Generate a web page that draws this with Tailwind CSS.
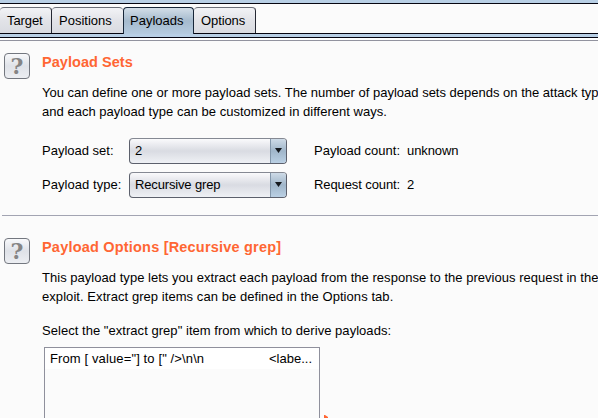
<!DOCTYPE html>
<html lang="en">
<head>
<meta charset="utf-8">
<title>Payloads</title>
<script src="https://cdn.jsdelivr.net/npm/@tailwindcss/browser@4"></script>
</head>
<body class="w-[598px] h-[418px] overflow-hidden bg-[#fbfbfb] font-['Liberation_Sans',Arial,sans-serif] text-[13px] leading-[19px] text-black whitespace-nowrap">
<header>
  <div class="h-1 bg-[#b8cfe5] border-b border-[#050510]"></div>
  <nav class="flex h-[30px] pt-[3px] border-b border-[#050510]">
    <div class="w-[52px] h-[26px] pl-[7px] pt-[3px] tracking-[-0.1px] border-t border-r border-t-[#6b6f78] border-r-[#252833] rounded-t-[4px] bg-linear-to-b from-[#f2f3f6] via-[#e2e3e8] to-[#d9dbe1]">Target</div>
    <div class="w-[71px] h-[26px] pl-[7px] pt-[3px] border-t border-t-[#6b6f78] rounded-t-[4px] bg-linear-to-b from-[#f2f3f6] via-[#e2e3e8] to-[#d9dbe1]">Positions</div>
    <div class="w-[71px] h-[27px] pl-1.5 pt-[3px] border-t border-x border-[#172638] rounded-t-[4px] bg-linear-to-b from-[#d3dee8] via-[#a5bacd] to-[#b5cbe0]">Payloads</div>
    <div class="w-[62px] h-[26px] pl-[7px] pt-[3px] tracking-[-0.1px] border-t border-r border-t-[#6b6f78] border-r-[#252833] rounded-t-[4px] bg-linear-to-b from-[#f2f3f6] via-[#e2e3e8] to-[#d9dbe1]">Options</div>
  </nav>
  <div class="h-1 bg-[#b8cfe5] border-b border-[#050510]"></div>
  <div class="h-[3px] border-b border-[#92939f] bg-white"></div>
</header>
<main>
  <section class="flex h-[175px] w-[596px] ml-0.5 pl-0.5 pt-3 border-b border-[#a2a4b2]">
    <div class="w-[26px] h-[26px] shrink-0 flex items-center justify-center rounded-[4px] border border-[#73777f] bg-linear-to-b from-[#f8f9fb] via-[#dfe2e8] to-[#eceef2] font-['DejaVu_Serif',serif] font-bold text-[22px] text-[#858585]">?</div>
    <div class="ml-3">
      <h2 class="font-bold text-[14.5px] tracking-[0.05px] text-[#ff6633]">Payload Sets</h2>
      <p class="mt-[11px]">You can define one or more payload sets. The number of payload sets depends on the attack type</p>
      <p class="tracking-[0.02px]">and each payload type can be customized in different ways.</p>
      <div class="grid grid-cols-[87px_185px_93px_auto] grid-rows-[26px_26px] gap-y-2 mt-[17px] items-center">
        <span class="-mt-0.5">Payload set:</span>
        <div class="w-[158px] h-[26px] flex items-center border border-[#5c606c] border-t-[#858993] rounded-[4px] overflow-hidden bg-linear-to-b from-[#fafafc] via-[#d9dbe2] to-[#eff1f5]">
          <span class="flex-1 pl-[5px] -mt-0.5">2</span>
          <span class="w-4 h-full flex items-center justify-center border-l border-[#8397ab] bg-linear-to-b from-[#cedbe7] via-[#a0b6ca] to-[#bad0e4]"><svg class="-mt-px" width="7" height="5" viewBox="0 0 7 5"><path d="M0 0h7L3.5 5z" fill="#15191e"/></svg></span>
        </div>
        <span class="-mt-0.5">Payload count:</span><span class="-mt-0.5 tracking-[-0.1px]">unknown</span>
        <span class="-mt-0.5 tracking-[0.05px]">Payload type:</span>
        <div class="w-[158px] h-[26px] flex items-center border border-[#5c606c] border-t-[#858993] rounded-[4px] overflow-hidden bg-linear-to-b from-[#fafafc] via-[#d9dbe2] to-[#eff1f5]">
          <span class="flex-1 pl-[5px] -mt-0.5 tracking-[-0.15px]">Recursive grep</span>
          <span class="w-4 h-full flex items-center justify-center border-l border-[#8397ab] bg-linear-to-b from-[#cedbe7] via-[#a0b6ca] to-[#bad0e4]"><svg class="-mt-px" width="7" height="5" viewBox="0 0 7 5"><path d="M0 0h7L3.5 5z" fill="#15191e"/></svg></span>
        </div>
        <span class="-mt-0.5 tracking-[-0.1px]">Request count:</span><span class="-mt-0.5">2</span>
      </div>
    </div>
  </section>
  <section class="flex pl-1 pt-[22px]">
    <div class="w-[26px] h-[26px] shrink-0 flex items-center justify-center rounded-[4px] border border-[#73777f] bg-linear-to-b from-[#f8f9fb] via-[#dfe2e8] to-[#eceef2] font-['DejaVu_Serif',serif] font-bold text-[22px] text-[#858585]">?</div>
    <div class="ml-3">
      <h2 class="font-bold text-[14.5px] tracking-[0.2px] text-[#ff6633]">Payload Options [Recursive grep]</h2>
      <p class="mt-[11px] tracking-[0.03px]">This payload type lets you extract each payload from the response to the previous request in the</p>
      <p class="tracking-[0.06px]">exploit. Extract grep items can be defined in the Options tab.</p>
      <p class="mt-[15px] tracking-[0.04px]">Select the "extract grep" item from which to derive payloads:</p>
      <div class="flex items-end">
        <div class="mt-[7px] ml-0.5 w-[276px] h-[71px] border border-b-0 border-[#8f909c]">
          <div class="h-[21px] bg-white pl-[5px] pr-[7px] flex justify-between leading-[21px]"><span class="tracking-[0.12px]">From [ value="] to [" /&gt;\n\n</span><span>&lt;labe...</span></div>
        </div>
        <svg class="ml-1 shrink-0" width="4" height="3" viewBox="0 0 4 3"><path d="M0 0h1l3 2v1H0z" fill="#ff6633"/></svg>
      </div>
    </div>
  </section>
</main>
</body>
</html>
